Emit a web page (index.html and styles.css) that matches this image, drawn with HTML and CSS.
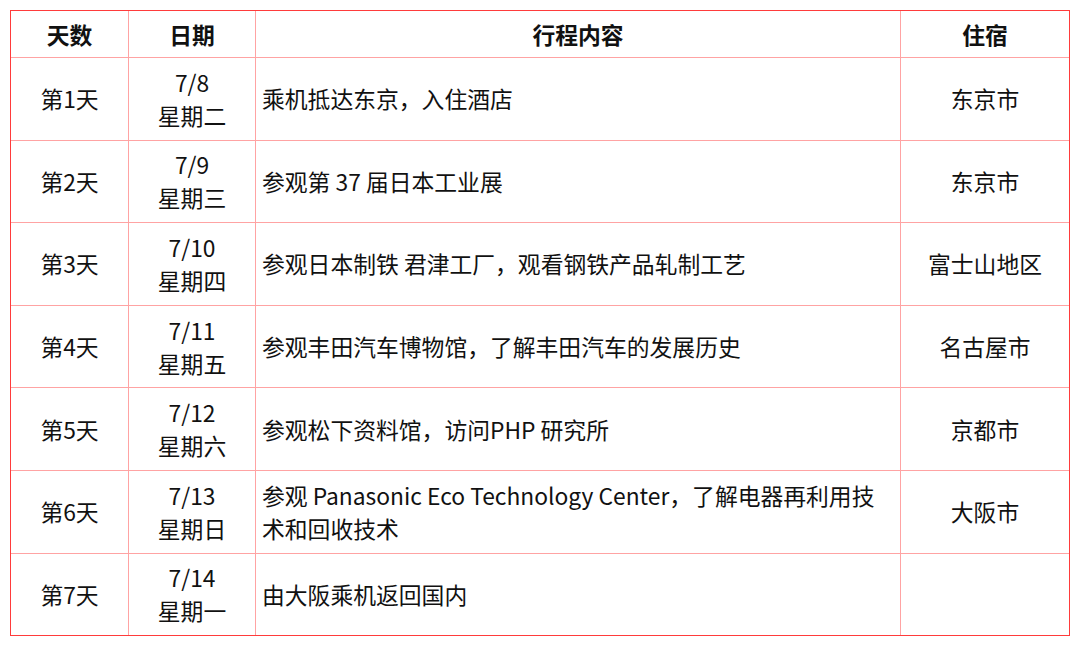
FILE: index.html
```html
<!DOCTYPE html>
<html lang="zh">
<head>
<meta charset="utf-8">
<link rel="stylesheet" href="styles.css">
</head>
<body>
<table class="plan">
  <colgroup>
    <col class="c-day"><col class="c-date"><col class="c-content"><col class="c-stay">
  </colgroup>
  <thead>
    <tr class="head"><th>天数</th><th>日期</th><th>行程内容</th><th>住宿</th></tr>
  </thead>
  <tbody>
    <tr><td class="ctr">第1天</td><td class="ctr">7/8<br>星期二</td><td class="txt">乘机抵达东京，入住酒店</td><td class="ctr">东京市</td></tr>
    <tr><td class="ctr">第2天</td><td class="ctr">7/9<br>星期三</td><td class="txt">参观第 37 届日本工业展</td><td class="ctr">东京市</td></tr>
    <tr><td class="ctr">第3天</td><td class="ctr">7/10<br>星期四</td><td class="txt">参观日本制铁 君津工厂，观看钢铁产品轧制工艺</td><td class="ctr">富士山地区</td></tr>
    <tr><td class="ctr">第4天</td><td class="ctr">7/11<br>星期五</td><td class="txt">参观丰田汽车博物馆，了解丰田汽车的发展历史</td><td class="ctr">名古屋市</td></tr>
    <tr><td class="ctr">第5天</td><td class="ctr">7/12<br>星期六</td><td class="txt">参观松下资料馆，访问PHP 研究所</td><td class="ctr">京都市</td></tr>
    <tr><td class="ctr">第6天</td><td class="ctr">7/13<br>星期日</td><td class="txt">参观 Panasonic Eco Technology Center，了解电器再利用技术和回收技术</td><td class="ctr">大阪市</td></tr>
    <tr class="last"><td class="ctr">第7天</td><td class="ctr">7/14<br>星期一</td><td class="txt">由大阪乘机返回国内</td><td class="ctr"></td></tr>
  </tbody>
</table>
</body>
</html>
```
FILE: styles.css
```css
html, body {
  margin: 0;
  padding: 0;
  background: #ffffff;
}
body {
  padding: 10px 0 0 10px;
  font-family: "Noto Sans CJK SC", "Noto Sans", sans-serif;
  color: #111111;
}
.plan {
  border-collapse: separate;
  border-spacing: 0;
  border: 1px solid #ff3b3b;
  width: 1060px;
  table-layout: fixed;
  font-size: 22.8px;
  line-height: 33px;
}
.c-day { width: 118px; }
.c-date { width: 127px; }
.c-content { width: 645px; }
.c-stay { width: 168px; }
.plan th, .plan td {
  border-right: 1px solid #ffa3a3;
  border-bottom: 1px solid #ffa3a3;
  padding: 0;
  vertical-align: middle;
}
.plan th:last-child, .plan td:last-child { border-right: none; }
.plan tr.last td { border-bottom: none; }
.head th {
  height: 46px;
  font-weight: 700;
  text-align: center;
}
.plan tbody td { height: 81.6px; }
.ctr { text-align: center; }
.txt { text-align: left; padding: 0 8px 0 6px !important; }
```
